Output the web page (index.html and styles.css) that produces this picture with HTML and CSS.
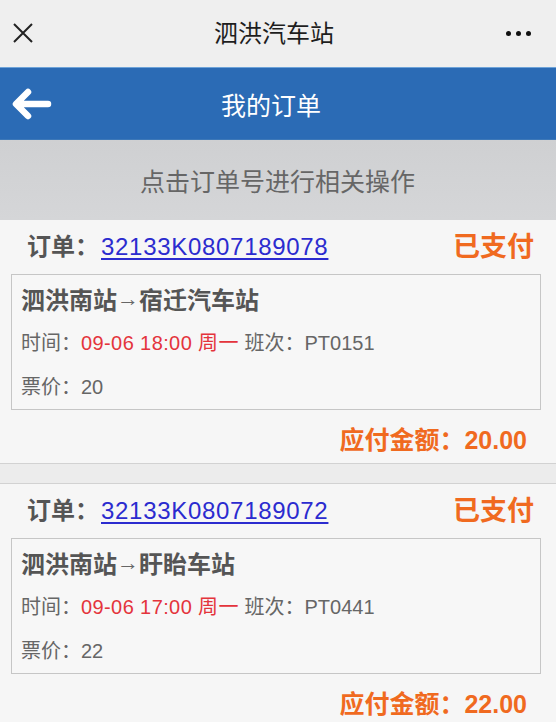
FILE: index.html
```html
<!DOCTYPE html>
<html lang="zh-CN">
<head>
<meta charset="utf-8">
<title>我的订单</title>
<link rel="stylesheet" href="styles.css">
</head>
<body>
<div class="nav">
  <svg class="nav-close" width="22" height="22" viewBox="0 0 22 22"><path d="M2 2 L20 20 M20 2 L2 20" stroke="#222" stroke-width="2" fill="none"/></svg>
  <div class="nav-title">泗洪汽车站</div>
  <div class="nav-more"><span></span><span></span><span></span></div>
</div>
<div class="bar">
  <svg class="bar-back" width="42" height="32" viewBox="0 0 42 32"><path d="M36 16 H5 M16 4 L4 16 L16 28" stroke="#fff" stroke-width="6.5" stroke-linecap="round" stroke-linejoin="round" fill="none"/></svg>
  <div class="bar-title">我的订单</div>
</div>
<div class="tip">点击订单号进行相关操作</div>
<div class="list">
  <div class="order">
    <div class="order-head">
      <div class="order-no">订单：<a href="#" class="order-link">32133K0807189078</a></div>
      <div class="order-status">已支付</div>
    </div>
    <div class="order-box">
      <div class="route">泗洪南站<span class="arrow">→</span>宿迁汽车站</div>
      <div class="info">时间：<span class="red">09-06 18:00 周一</span> 班次：PT0151</div>
      <div class="info">票价：20</div>
    </div>
    <div class="order-amount">应付金额：20.00</div>
  </div>
  <div class="order">
    <div class="order-head">
      <div class="order-no">订单：<a href="#" class="order-link">32133K0807189072</a></div>
      <div class="order-status">已支付</div>
    </div>
    <div class="order-box">
      <div class="route">泗洪南站<span class="arrow">→</span>盱眙车站</div>
      <div class="info">时间：<span class="red">09-06 17:00 周一</span> 班次：PT0441</div>
      <div class="info">票价：22</div>
    </div>
    <div class="order-amount">应付金额：22.00</div>
  </div>
</div>
</body>
</html>
```
FILE: styles.css
```css
html, body {
  margin: 0;
  padding: 0;
}
body {
  width: 556px;
  height: 722px;
  overflow: hidden;
  background: #f6f6f6;
  font-family: "Liberation Sans", "Noto Sans CJK SC", sans-serif;
}
.nav {
  height: 68px;
  background: #efefef;
  display: flex;
  align-items: center;
  justify-content: space-between;
  padding: 0 25px 0 12px;
  box-sizing: border-box;
  border-bottom: 1px solid #6ea3d8;
}
.nav-close {
  display: block;
  margin-top: -2px;
}
.nav-title {
  font-size: 24px;
  color: #1e1e1e;
  line-height: 30px;
  margin-left: 8px;
}
.nav-more {
  display: flex;
  gap: 5px;
  margin-top: -1px;
}
.nav-more span {
  width: 5px;
  height: 5px;
  border-radius: 50%;
  background: #111;
}
.bar {
  height: 71px;
  background: #2b6bb5;
  display: flex;
  align-items: center;
  border-bottom: 1px solid #3d78b8;
}
.bar-back {
  display: block;
  margin-left: 12px;
}
.bar-title {
  flex: 1;
  text-align: center;
  font-size: 25px;
  color: #fff;
  margin-right: 68px;
  margin-left: 0;
}
.tip {
  height: 80px;
  background: linear-gradient(#cfd0d2, #d5d6d8);
  color: #666;
  font-size: 25px;
  display: flex;
  align-items: center;
  justify-content: center;
  padding-right: 1px;
}
.list {
  background: #ececec;
  display: flex;
  flex-direction: column;
  gap: 19px;
}
.order {
  background: #f6f6f6;
  border-bottom: 1px solid #d2d2d2;
}
.order + .order {
  border-top: 1px solid #d2d2d2;
}
.order-head {
  height: 54px;
  display: flex;
  align-items: center;
  justify-content: space-between;
  padding: 0 22px 0 27px;
}
.order-no {
  font-size: 24px;
  color: #555;
  font-weight: bold;
  line-height: 30px;
}
.order-link {
  color: #2b2bcf;
  font-weight: normal;
  text-decoration: underline;
  text-decoration-thickness: 1.5px;
  text-underline-offset: 3px;
  letter-spacing: 0.7px;
  margin-left: 2px;
}
.order-status {
  font-size: 27px;
  font-weight: bold;
  color: #f06a1f;
  line-height: 30px;
}
.order-box {
  margin: 0 15px 0 11px;
  border: 1px solid #c6c6c6;
  background: #f7f7f7;
  padding: 2px 9px 0 9px;
}
.route {
  height: 44px;
  line-height: 44px;
  font-size: 24px;
  font-weight: bold;
  color: #555;
}
.arrow {
  font-family: "Liberation Sans", sans-serif;
  font-weight: normal;
  font-size: 22px;
  color: #666;
  vertical-align: 3px;
}
.info {
  height: 44px;
  line-height: 44px;
  font-size: 20px;
  color: #666;
}
.red {
  color: #e4343c;
  letter-spacing: 0.4px;
}
.order-amount {
  height: 53px;
  display: flex;
  align-items: center;
  justify-content: flex-end;
  padding-right: 29px;
  padding-top: 2px;
  box-sizing: border-box;
  font-size: 25px;
  font-weight: bold;
  color: #f06a1f;
}
```
